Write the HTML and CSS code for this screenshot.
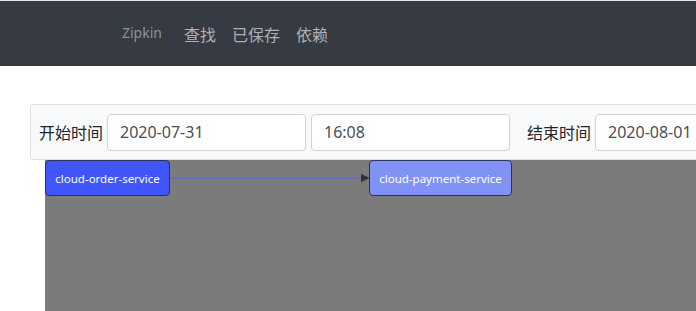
FILE: index.html
```html
<!DOCTYPE html>
<html lang="zh-CN">
<head>
    <meta charset="UTF-8">
    <meta name="viewport" content="width=device-width, initial-scale=1.0">
    <title>Zipkin - 依赖</title>
    <link rel="stylesheet" href="styles.css">
</head>
<body>
    <div class="topline"></div>
    <nav class="navbar">
        <span class="brand">Zipkin</span>
        <a class="nav-link" href="#">查找</a>
        <a class="nav-link" href="#">已保存</a>
        <a class="nav-link" href="#">依赖</a>
    </nav>

    <div class="content">
        <form class="time-form">
            <label for="startDate">开始时间</label>
            <input type="text" id="startDate" class="field" value="2020-07-31">
            <input type="text" id="startTime" class="field" value="16:08">
            <label for="endDate" class="end-label">结束时间</label>
            <input type="text" id="endDate" class="field" value="2020-08-01">
        </form>

        <div class="graph">
            <svg class="edges" width="651" height="151">
                <defs>
                    <marker id="arrow" markerWidth="6" markerHeight="6" refX="5" refY="3" orient="auto">
                        <path d="M0,0 L6,3 L0,6 z" fill="#333"></path>
                    </marker>
                </defs>
                <line x1="125" y1="18" x2="323" y2="18" stroke="#5b6bd0" stroke-width="1.5" marker-end="url(#arrow)"></line>
            </svg>
            <div class="node node-order">cloud-order-service</div>
            <div class="node node-payment">cloud-payment-service</div>
        </div>
    </div>
</body>
</html>
```

FILE: styles.css
```css
body {
    margin: 0;
    font-family: "Noto Sans", "Noto Sans CJK SC", sans-serif;
    background: #fff;
    overflow: hidden;
}
.topline {
    height: 1px;
    background: #e4e6ea;
}
.navbar {
    height: 65px;
    background: #363a42;
    display: flex;
    align-items: center;
    padding-left: 122px;
}
.brand {
    color: #8e9296;
    font-size: 14px;
    margin-right: 14px;
    padding-bottom: 2px;
}
.nav-link {
    color: #aeb1b4;
    font-family: "Noto Sans CJK SC", sans-serif;
    font-size: 16px;
    text-decoration: none;
    padding: 0 8px;
}
.content {
    padding-top: 38px;
    padding-left: 30px;
    overflow: hidden;
}
.time-form {
    margin: 0;
    height: 54px;
    width: 700px;
    background: #f8f9fa;
    border: 1px solid #e0e2e5;
    border-right: none;
    border-radius: 4px 0 0 4px;
    display: flex;
    align-items: center;
    padding-left: 8px;
    font-family: "Noto Sans CJK SC", sans-serif;
    font-size: 16px;
    color: #212529;
}
.time-form label {
    flex-shrink: 0;
    margin-right: 4px;
    white-space: nowrap;
}
.end-label {
    margin-left: 12px;
}
.field {
    flex-shrink: 0;
    box-sizing: border-box;
    width: 199px;
    height: 37px;
    margin-right: 5px;
    padding: 0 12px;
    border: 1px solid #ced4da;
    border-radius: 4px;
    background: #fff;
    color: #495057;
    font-family: "Noto Sans", sans-serif;
    font-size: 16px;
}
.graph {
    position: relative;
    margin-left: 15px;
    height: 151px;
    background: #7b7b7b;
}
.edges {
    position: absolute;
    left: 0;
    top: 0;
}
.node {
    position: absolute;
    top: 0;
    box-sizing: border-box;
    height: 36px;
    border: 1px solid #2e3160;
    border-radius: 4px;
    color: #fff;
    font-size: 11.5px;
    display: flex;
    align-items: center;
    justify-content: center;
}
.node-order {
    left: 0;
    width: 125px;
    background: #4156fa;
}
.node-payment {
    left: 324px;
    width: 143px;
    background: #8092f5;
}
```
